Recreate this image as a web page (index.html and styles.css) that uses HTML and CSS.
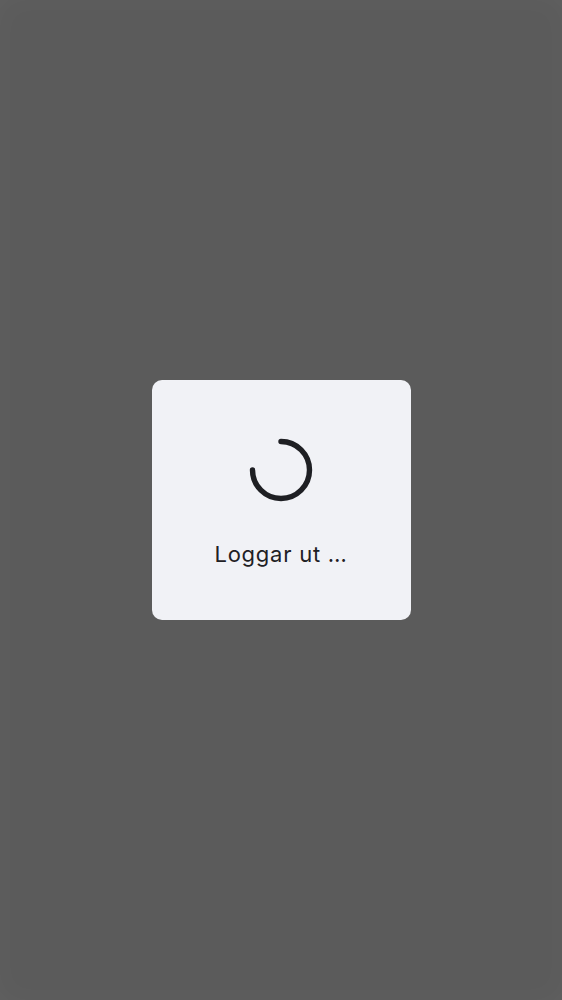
FILE: index.html
```html
<!DOCTYPE html>
<html lang="sv">
<head>
<meta charset="utf-8">
<link rel="stylesheet" href="styles.css">
<title>Loggar ut</title>
</head>
<body>
<div class="scrim">
  <div class="dialog" role="alertdialog" aria-label="Loggar ut">
    <svg class="spinner" width="64" height="64" viewBox="0 0 64 64" aria-hidden="true">
      <path d="M 32 3.5 A 28.5 28.5 0 1 1 3.5 32" fill="none" stroke="#1e1f23" stroke-width="5.4" stroke-linecap="round"/>
    </svg>
    <div class="label">Loggar ut …</div>
  </div>
</div>
</body>
</html>
```

FILE: styles.css
```css
html, body {
  margin: 0;
  padding: 0;
  height: 100%;
}
body {
  background: #5b5b5b;
  font-family: Inter, Roboto, sans-serif;
}
.scrim {
  height: 100vh;
  display: flex;
  align-items: center;
  justify-content: center;
  box-shadow: inset 0 0 30px rgba(255, 255, 255, 0.03);
}
.dialog {
  width: 259px;
  height: 240px;
  box-sizing: border-box;
  background: #f1f2f6;
  border-radius: 10px;
  display: flex;
  flex-direction: column;
  align-items: center;
  padding-top: 58px;
}
.spinner {
  display: block;
}
.label {
  margin-top: 38px;
  font-size: 22px;
  line-height: 28px;
  color: #1f2024;
  letter-spacing: 0.75px;
}
```
